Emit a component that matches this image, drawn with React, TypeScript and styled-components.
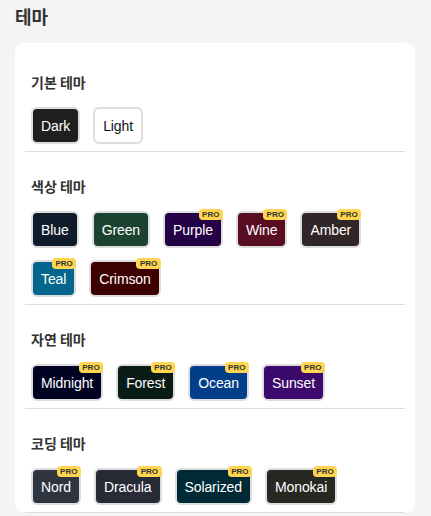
import React from "react";
import styled, { createGlobalStyle } from "styled-components";

const GlobalStyle = createGlobalStyle`
  html, body {
    margin: 0;
    padding: 0;
    background: #f4f4f4;
  }
  body {
    font-family: "Liberation Sans", "Noto Sans CJK KR", Arial, sans-serif;
    color: #333;
  }
`;

const Page = styled.div`
  padding: 4px 16px 0 15px;
`;

const PageTitle = styled.h2`
  margin: 0;
  font-family: "Noto Sans CJK KR", "Liberation Sans", sans-serif;
  font-size: 18px;
  font-weight: 700;
  line-height: 24px;
  color: #333;
  margin-bottom: 15px;
`;

const Card = styled.div`
  background: #fff;
  border-radius: 9px;
  padding: 5px 10px 0;
`;

const Section = styled.section`
  padding: 24px 5px 7px 6px;
  border-bottom: 1px solid #ddd;
`;

const SectionTitle = styled.h3`
  margin: 0 0 15px;
  font-family: "Noto Sans CJK KR", "Liberation Sans", sans-serif;
  font-size: 14px;
  font-weight: 700;
  line-height: 20px;
  color: #333;
`;

const ButtonRow = styled.div`
  display: flex;
  flex-wrap: wrap;
  column-gap: 13px;
  row-gap: 12px;
`;

const ThemeButton = styled.button<{ $bg: string; $fg: string }>`
  position: relative;
  box-sizing: border-box;
  height: 37px;
  padding: 0 8px;
  border: 2px solid #ddd;
  border-radius: 6px;
  background: ${(p) => p.$bg};
  color: ${(p) => p.$fg};
  font-family: "Liberation Sans", Arial, sans-serif;
  font-size: 14px;
  line-height: 16px;
  letter-spacing: -0.1px;
  cursor: pointer;
`;

const ProBadge = styled.span`
  position: absolute;
  top: -4px;
  right: -2px;
  background: #ffd54f;
  color: #333;
  font-family: "Liberation Sans", Arial, sans-serif;
  font-size: 8px;
  font-weight: 700;
  line-height: 9px;
  letter-spacing: 0;
  padding: 1px 3.5px;
  border-radius: 4px;
`;

type Theme = { name: string; bg: string; fg?: string; pro?: boolean };

const sections: { title: string; themes: Theme[] }[] = [
  {
    title: "기본 테마",
    themes: [
      { name: "Dark", bg: "#1f1f1f" },
      { name: "Light", bg: "#ffffff", fg: "#111" },
    ],
  },
  {
    title: "색상 테마",
    themes: [
      { name: "Blue", bg: "#0d1b2a" },
      { name: "Green", bg: "#1b4332" },
      { name: "Purple", bg: "#240046", pro: true },
      { name: "Wine", bg: "#590d22", pro: true },
      { name: "Amber", bg: "#312627", pro: true },
      { name: "Teal", bg: "#05668d", pro: true },
      { name: "Crimson", bg: "#3d0000", pro: true },
    ],
  },
  {
    title: "자연 테마",
    themes: [
      { name: "Midnight", bg: "#000221", pro: true },
      { name: "Forest", bg: "#081c15", pro: true },
      { name: "Ocean", bg: "#023e8a", pro: true },
      { name: "Sunset", bg: "#3c096c", pro: true },
    ],
  },
  {
    title: "코딩 테마",
    themes: [
      { name: "Nord", bg: "#2e3440", pro: true },
      { name: "Dracula", bg: "#282a36", pro: true },
      { name: "Solarized", bg: "#002b36", pro: true },
      { name: "Monokai", bg: "#272822", pro: true },
    ],
  },
];

export default function App() {
  return (
    <>
      <GlobalStyle />
      <Page>
        <PageTitle>테마</PageTitle>
        <Card>
          {sections.map((s) => (
            <Section key={s.title}>
              <SectionTitle>{s.title}</SectionTitle>
              <ButtonRow>
                {s.themes.map((t) => (
                  <ThemeButton key={t.name} $bg={t.bg} $fg={t.fg ?? "#fff"}>
                    {t.name}
                    {t.pro && <ProBadge>PRO</ProBadge>}
                  </ThemeButton>
                ))}
              </ButtonRow>
            </Section>
          ))}
        </Card>
      </Page>
    </>
  );
}
